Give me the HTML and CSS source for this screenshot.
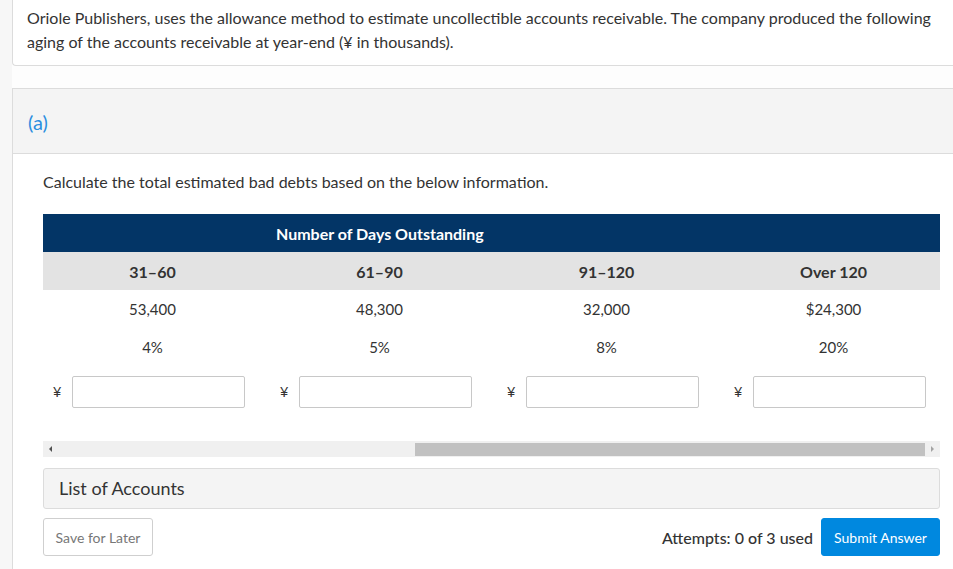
FILE: index.html
```html
<!DOCTYPE html>
<html>
<head>
<meta charset="utf-8">
<link rel="stylesheet" href="styles.css">
</head>
<body>
<div class="page">
  <div class="intro">
    <p>Oriole Publishers, uses the allowance method to estimate uncollectible accounts receivable. The company produced the following aging of the accounts receivable at year-end (¥ in thousands).</p>
  </div>
  <div class="section">
    <div class="section-head">(a)</div>
    <div class="section-body">
      <p class="prompt">Calculate the total estimated bad debts based on the below information.</p>
      <div class="scroller">
        <table class="aging">
          <colgroup>
            <col class="c"><col class="c"><col class="c"><col class="c">
          </colgroup>
          <tr class="row-head">
            <th class="blank"></th>
            <th class="title" colspan="3">Number of Days Outstanding</th>
          </tr>
          <tr class="row-sub">
            <th>31–60</th><th>61–90</th><th>91–120</th><th>Over 120</th>
          </tr>
          <tr class="row-val">
            <td>53,400</td><td>48,300</td><td>32,000</td><td>$24,300</td>
          </tr>
          <tr class="row-val">
            <td>4%</td><td>5%</td><td>8%</td><td>20%</td>
          </tr>
          <tr class="row-input">
            <td><div class="field"><span class="yen">¥</span><input type="text"></div></td>
            <td><div class="field"><span class="yen">¥</span><input type="text"></div></td>
            <td><div class="field"><span class="yen">¥</span><input type="text"></div></td>
            <td><div class="field"><span class="yen">¥</span><input type="text"></div></td>
          </tr>
        </table>
      </div>
      <div class="scrollbar">
        <span class="arrow left"></span>
        <div class="track"><div class="thumb"></div></div>
        <span class="arrow right"></span>
      </div>
      <div class="accounts">List of Accounts</div>
      <div class="actions">
        <button class="save">Save for Later</button>
        <div class="submit-group">
          <span class="attempts">Attempts: 0 of 3 used</span>
          <button class="submit">Submit Answer</button>
        </div>
      </div>
    </div>
  </div>
</div>
</body>
</html>
```
FILE: styles.css
```css
html, body {
  margin: 0;
  padding: 0;
}
body {
  background: #f7f7f7;
  font-family: Lato, "Open Sans", "Liberation Sans", sans-serif;
  color: #333;
  overflow: hidden;
  width: 953px;
  height: 569px;
}
.page {
  margin-left: 12px;
  background: #fdfdfd;
  height: 569px;
  width: 960px;
  display: flex;
  flex-direction: column;
}
.intro {
  background: #fff;
  border: 1px solid #dcdcdc;
  border-top: none;
  border-right: none;
  border-radius: 0 0 0 4px;
  padding: 6px 20px 11px 14px;
}
.intro p {
  margin: 0;
  font-size: 16px;
  line-height: 24px;
}
.section {
  margin-top: 22px;
  border: 1px solid #dcdcdc;
  border-right: none;
  border-bottom: none;
  background: #fff;
  flex: 1;
  min-height: 0;
  overflow: hidden;
}
.section-head {
  background: #f4f4f4;
  border-bottom: 1px solid #dcdcdc;
  height: 64px;
  line-height: 66px;
  padding-left: 15px;
  font-size: 20px;
  color: #2b8ee0;
}
.section-body {
  padding: 16px 0 0 30px;
  width: 897px;
}
.prompt {
  margin: 0;
  font-size: 16px;
  line-height: 24px;
}
.scroller {
  margin-top: 20px;
  width: 897px;
  overflow: hidden;
}
.aging {
  border-collapse: collapse;
  table-layout: fixed;
  width: 908px;
  margin-left: -4px;
}
.aging col.c {
  width: 227px;
}
.aging th, .aging td {
  padding: 0;
  text-align: center;
  font-size: 15px;
}
.row-head th {
  background: #033566;
  color: #fff;
  height: 38px;
  font-weight: 700;
  font-size: 16px;
}
.row-head .title {
  text-align: left;
  padding-left: 10px;
}
.row-sub th {
  background: #e3e3e3;
  height: 38px;
  font-weight: 700;
  font-size: 16px;
  color: #333;
}
.row-val td {
  height: 38px;
}
.row-input td {
  height: 52px;
}
.field {
  display: flex;
  align-items: center;
  justify-content: flex-end;
  padding-right: 21px;
}
.yen {
  font-family: "Liberation Sans", sans-serif;
  font-size: 14px;
  color: #333;
  margin-right: 11px;
}
.field input {
  width: 173px;
  height: 32px;
  box-sizing: border-box;
  border: 1px solid #c8c8c8;
  border-radius: 2px;
  background: #fff;
  margin: 0;
}
.scrollbar {
  margin-top: 23px;
  height: 16px;
  background: #f0f0f0;
  display: flex;
  align-items: center;
}
.arrow {
  width: 14px;
  height: 16px;
  position: relative;
}
.arrow.left::after, .arrow.right::after {
  content: "";
  position: absolute;
  top: 5px;
  border-top: 3px solid transparent;
  border-bottom: 3px solid transparent;
}
.arrow.left::after {
  left: 6px;
  border-right: 3px solid #505050;
}
.arrow.right::after {
  left: 5px;
  border-left: 3px solid #a3a3a3;
}
.track {
  flex: 1;
  height: 16px;
  position: relative;
}
.thumb {
  position: absolute;
  left: 358px;
  right: 1px;
  top: 2px;
  bottom: 1px;
  background: #c1c1c1;
}
.accounts {
  margin-top: 11px;
  height: 41px;
  box-sizing: border-box;
  border: 1px solid #dcdcdc;
  border-radius: 3px;
  background: #f4f4f4;
  font-size: 18px;
  line-height: 39px;
  padding-left: 15px;
  color: #333;
}
.actions {
  margin-top: 9px;
  display: flex;
  justify-content: space-between;
  align-items: center;
}
button {
  font-family: Lato, "Open Sans", "Liberation Sans", sans-serif;
  height: 38px;
  border-radius: 3px;
  font-size: 14px;
  cursor: pointer;
}
.save {
  width: 110px;
  background: #fff;
  border: 1px solid #cfcfcf;
  color: #777;
}
.submit-group {
  display: flex;
  align-items: center;
  gap: 8px;
}
.attempts {
  font-size: 16px;
  font-weight: 500;
  color: #333;
}
.submit {
  width: 119px;
  background: #0088df;
  border: 1px solid #0088df;
  color: #fff;
}
```
